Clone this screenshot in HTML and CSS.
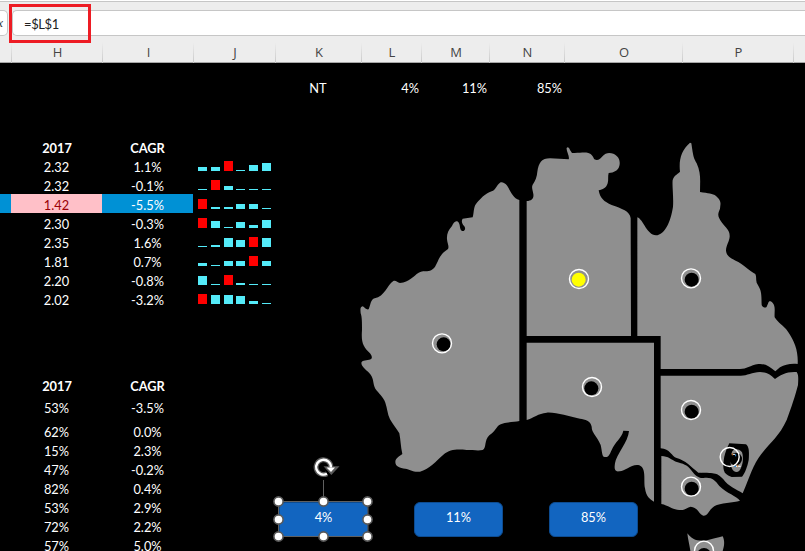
FILE: index.html
```
<!DOCTYPE html>
<html lang="en">
<head>
<meta charset="utf-8">
<title>Workbook</title>
<link rel="stylesheet" href="styles.css">
</head>
<body>
<div class="app">
  <header class="formula-bar">
    <div class="fx-box"><i>fx</i></div>
    <div class="formula-input">=$L$1</div>
  </header>
  <div class="highlight-box"></div>
  <div class="columns grid-cols">
    <span></span><span>H</span><span>I</span><span>J</span><span>K</span><span>L</span><span>M</span><span>N</span><span>O</span><span>P</span><span></span>
  </div>
  <main class="sheet">
    <div class="row top-row grid-cols">
      <b></b><b></b><b></b><b></b><span class="c">NT</span><span class="r">4%</span><span class="r">11%</span><span class="r">85%</span>
    </div>
    <div class="table table-one" id="growth">
      <div class="row head grid-cols"><b></b><span>2017</span><span>CAGR</span></div>
      <div class="row grid-cols"><b></b><span>2.32</span><span>1.1%</span><div class="spark" data-v="4,4,10,1,6,8"></div></div>
      <div class="row grid-cols"><b></b><span>2.32</span><span>-0.1%</span><div class="spark" data-v="1,10,4,1,1,1"></div></div>
      <div class="row picked grid-cols"><b></b><span class="low">1.42</span><span>-5.5%</span><div class="spark" data-v="10,2,2,5,5,1"></div></div>
      <div class="row grid-cols"><b></b><span>2.30</span><span>-0.3%</span><div class="spark" data-v="10,7,1,6,3,8"></div></div>
      <div class="row grid-cols"><b></b><span>2.35</span><span>1.6%</span><div class="spark" data-v="1,2,9,7,10,9"></div></div>
      <div class="row grid-cols"><b></b><span>1.81</span><span>0.7%</span><div class="spark" data-v="3,1,5,5,10,5"></div></div>
      <div class="row grid-cols"><b></b><span>2.20</span><span>-0.8%</span><div class="spark" data-v="9,1,10,2,1,1"></div></div>
      <div class="row grid-cols"><b></b><span>2.02</span><span>-3.2%</span><div class="spark" data-v="10,9,9,8,3,1"></div></div>
    </div>
    <div class="table table-two">
      <div class="row head grid-cols"><b></b><span>2017</span><span>CAGR</span></div>
      <div class="row h22 grid-cols"><b></b><span>53%</span><span>-3.5%</span></div>
      <div class="row h24 grid-cols"><b></b><span>62%</span><span>0.0%</span></div>
      <div class="row grid-cols"><b></b><span>15%</span><span>2.3%</span></div>
      <div class="row grid-cols"><b></b><span>47%</span><span>-0.2%</span></div>
      <div class="row grid-cols"><b></b><span>82%</span><span>0.4%</span></div>
      <div class="row grid-cols"><b></b><span>53%</span><span>2.9%</span></div>
      <div class="row grid-cols"><b></b><span>72%</span><span>2.2%</span></div>
      <div class="row grid-cols"><b></b><span>57%</span><span>5.0%</span></div>
    </div>

    <svg class="map" viewBox="0 0 1365 1263" width="455" height="421">
      <g class="land">
        <path d="M508 210C490 205 482 185 472 168C465 158 455 155 450 158C440 164 438 180 425 184C405 190 390 208 378 222C370 232 372 250 368 262L338 266C332 275 338 285 344 290C348 298 342 306 335 302C328 298 332 282 324 275C316 270 310 278 306 288C294 302 290 312 291 328C292 340 298 350 294 357C280 366 272 376 266 388C258 406 254 418 240 422C228 425 220 421 206 428C190 438 178 456 150 459C142 458 138 450 130 453C112 464 104 500 74 505C62 508 62 524 56 538C48 540 44 532 38 529C30 530 31 540 32 550C36 560 36 580 36 600C33 640 40 650 60 670C68 680 66 686 62 688C50 692 38 690 34 698C34 712 54 722 62 734C72 748 68 760 76 776C86 790 100 800 106 818C112 836 112 850 120 868C130 886 140 896 148 910C152 930 152 950 157 972C150 978 136 984 136 996C136 1010 150 1014 166 1016C180 1018 190 1028 210 1025C236 1018 260 992 280 974C300 958 320 957 350 960C370 960 385 963 398 960C410 954 402 930 418 916C430 908 436 898 444 888C456 876 490 877 508 873Z"/>
        <path d="M530 213C545 212 552 205 550 192C548 180 544 172 548 164C556 152 561 140 562 125C566 98 575 85 600 85L656 88C660 80 648 62 650 54C653 50 657 52 660 60L666 69C690 70 700 66 715 69C726 73 728 78 733 88C744 94 750 86 756 80C768 66 780 68 790 71C806 78 812 92 808 108C804 122 792 128 776 129C773 138 776 150 773 160C768 176 758 178 746 181C750 205 762 215 785 225C815 236 840 243 842 265L843 618H530Z"/>
        <path d="M862 262C880 268 890 315 918 316C945 314 962 275 969 230C971 200 966 165 968 150C972 135 985 132 990 125C986 90 994 60 1020 38L1024 40C1030 80 1030 82 1040 100C1054 130 1050 155 1050 186C1075 190 1088 190 1098 198C1118 215 1110 225 1110 236C1100 258 1106 262 1115 277C1128 295 1140 300 1139 320C1138 335 1128 345 1128 362C1130 382 1150 388 1165 396C1185 408 1195 420 1216 432C1220 440 1217 446 1220 458C1232 480 1235 480 1235 525C1238 534 1248 534 1250 530C1256 520 1254 512 1262 514C1280 525 1272 545 1274 562C1285 580 1300 585 1314 605C1335 635 1345 665 1343 702C1320 700 1305 704 1290 712L1276 724C1260 710 1245 700 1225 702C1200 706 1190 717 1170 717H932V618H862Z"/>
        <path d="M530 638H912V1115C900 1108 888 1100 885 1075C880 1050 890 1015 868 1006C845 1000 825 1025 808 1024C795 1026 792 1018 795 1000C798 975 835 935 837 903L820 902C815 925 795 935 785 960C777 978 775 982 764 981C755 980 757 965 752 945C740 915 725 910 725 890C722 872 705 868 690 866C655 860 620 846 590 848C565 850 550 864 530 870Z"/>
        <path d="M932 737H1170C1190 738 1205 727 1230 726C1255 727 1262 735 1275 747C1290 735 1310 724 1340 726C1346 735 1345 745 1344 765C1335 800 1325 830 1310 870C1285 925 1255 940 1225 985C1205 1015 1190 1065 1178 1090C1160 1078 1135 1070 1120 1048C1100 1025 1090 1030 1045 1028C1025 1012 1005 990 980 984C965 980 960 956 932 955Z"/>
        <path d="M934 978C955 978 965 990 978 995C1000 1002 1010 1002 1025 1022C1035 1035 1045 1045 1060 1044C1085 1040 1095 1050 1108 1068C1130 1090 1160 1098 1170 1112C1150 1118 1110 1118 1094 1128C1075 1140 1075 1158 1060 1157C1045 1152 1045 1132 1022 1130C1010 1132 1005 1142 988 1140C965 1138 955 1126 934 1122Z"/>
        <path d="M1012 1210C1030 1232 1040 1232 1065 1232C1085 1228 1105 1222 1118 1219C1126 1235 1122 1250 1116 1270H1022C1020 1250 1014 1230 1012 1210Z"/>
      </g>
      <path d="M1138 940L1188 943C1197 950 1198 965 1196 990C1192 1010 1185 1030 1176 1040L1145 1041C1130 1035 1120 1028 1120 1010C1120 980 1128 960 1138 940Z"/>
      <path class="land" d="M1146 966C1150 955 1168 955 1176 967C1182 985 1178 1010 1168 1022C1160 1030 1150 1025 1145 1014C1140 1000 1140 980 1146 966Z"/>
      <circle cx="1157" cy="987" r="19"/>
      <path class="speck" d="M1148 973h8M1158 1009h14"/>
      <path class="speck-blue" d="M1152 1009h6M1157 973v6"/>
      <path class="speck-gold" d="M1163 1004v6M1147 970v6"/>
      <circle cx="281" cy="643" r="21"/><circle cx="1025" cy="449" r="21"/><circle cx="724" cy="775" r="21"/>
      <circle cx="1025" cy="845" r="21"/><circle cx="1025" cy="1076" r="21"/><circle cx="1062" cy="1275" r="21"/>
      <circle class="active" cx="686" cy="449" r="21"/>
      <g class="ring">
        <circle cx="276" cy="640" r="28.5"/><circle cx="687" cy="447" r="28.5"/><circle cx="1023" cy="445" r="28.5"/>
        <circle cx="726" cy="771" r="28.5"/><circle cx="1023" cy="840" r="28.5"/><circle cx="1139" cy="981" r="28.5"/>
        <circle cx="1023" cy="1070" r="28.5"/><circle cx="1062" cy="1262" r="28.5"/>
      </g>
    </svg>

    <div class="shape shape-a">4%</div>
    <div class="shape shape-b">11%</div>
    <div class="shape shape-c">85%</div>

    <svg class="selection" viewBox="0 0 110 90" width="110" height="90">
      <path class="frame" d="M53.500 25V46.500M8.500 46.500H98V81.500H8.500Z"/>
      <g class="handles">
        <circle cx="8.500" cy="46.500" r="4.600"/><circle cx="53.500" cy="46.500" r="4.600"/><circle cx="97.500" cy="46.500" r="4.600"/>
        <circle cx="8.500" cy="64.500" r="4.600"/><circle cx="97.500" cy="64.500" r="4.600"/>
        <circle cx="8.500" cy="81.500" r="4.600"/><circle cx="53.500" cy="81.500" r="4.600"/><circle cx="97.500" cy="81.500" r="4.600"/>
      </g>
      <path class="turn-edge" d="M57 18.700A7.400 7.400 0 1 1 60.900 12.500"/>
      <path class="turn-tip" d="M53.500 11.200H69.500L61.300 20Z"/>
      <path class="turn" d="M57 18.700A7.400 7.400 0 1 1 60.900 12.500"/>
      <path class="turn-head" d="M56.500 12.500H65L61 17Z"/>
    </svg>
  </main>
</div>
<script src="spark.js"></script>
</body>
</html>
```
FILE: styles.css
```
* { box-sizing: border-box; }
body { margin: 0; background: #000; overflow: hidden; }
.app { position: relative; width: 805px; height: 551px; overflow: hidden; font-family: Lato, "Open Sans", sans-serif; }

.formula-bar {
  display: flex;
  gap: 4px;
  height: 36px;
  padding-top: 9px;
  background: #ededed;
  border-top: 1px solid #fff;
  box-shadow: inset 0 1px #c6c6c6;
}
.fx-box {
  display: flex;
  align-items: center;
  justify-content: flex-end;
  width: 8px;
  height: 26px;
  padding-right: 4px;
  overflow: hidden;
  background: #fff;
  border: 1px solid #c6c6c6;
  border-left: 0;
  border-radius: 0 5px 5px 0;
  font: 13px "Liberation Serif", serif;
  color: #333;
}
.formula-input {
  flex: 1;
  height: 26px;
  padding-left: 11px;
  background: #fff;
  border: 1px solid #c6c6c6;
  border-right: 0;
  border-radius: 5px 0 0 5px;
  font-size: 13px;
  letter-spacing: -0.4px;
  line-height: 26px;
  color: #222;
}
.highlight-box {
  position: absolute;
  z-index: 2;
  left: 9px;
  top: 4px;
  width: 82px;
  height: 39px;
  border: 3px solid #ed1c24;
}

.grid-cols { display: grid; grid-template-columns: 11px 91px 91px 82px 86px 60px 68px 75px 118px 111px 12px; }
.columns {
  height: 27px;
  background: #ededed;
  border-bottom: 1px solid #a6a6a6;
  font: 13px/32px "Open Sans", sans-serif;
  color: #444;
  text-align: center;
}
.columns span {
  background: linear-gradient(#ededed 20%, #c0c0c0) right bottom / 1px 100% no-repeat;
  position: relative;
  left: 1px;
}

.sheet { position: relative; height: 488px; background: #000; color: #fff; font-size: 12.800px; }
.row { height: 19px; grid-template-rows: 100%; line-height: 23px; text-align: center; }
.row > span { white-space: nowrap; }
.top-row { padding-top: 14px; height: 33px; }
.top-row .r { text-align: right; padding-right: 2px; }
.table-one { margin-top: 41px; }
.table-two { margin-top: 67px; }
.head { font-weight: 700; }
.head > span:nth-child(2) { padding-left: 1px; }
.h22 { height: 22px; line-height: 28px; }
.h24 { height: 24px; line-height: 32px; }
.picked > b, .picked > span { background: #0091d5; }
.picked > .low { background: #ffc0c8; color: #9c0006; }
.spark { display: grid; grid-template-columns: 13px 13px 12px 13px 13px 9px; align-items: end; height: 15px; padding-left: 5px; }
.spark i { width: 9px; background: #54ebf9; }
.spark i.peak { background: #f00; }

.map { position: absolute; left: 350px; top: 67px; }
.land { fill: #8f8f8f; }
.active { fill: #ff0; }
.ring { fill: none; stroke: #fff; stroke-width: 4.200; }
.speck { stroke: #fff; stroke-width: 3; }
.speck-blue { stroke: #2588df; stroke-width: 3; }
.speck-gold { stroke: #c66d20; stroke-width: 3; }

.shape {
  position: absolute;
  top: 439px;
  width: 89px;
  height: 35px;
  border: 1px solid #0d4c91;
  border-radius: 6px;
  background: #1265c0;
  line-height: 29px;
  text-align: center;
}
.shape-a { left: 279px; }
.shape-b { left: 414px; }
.shape-c { left: 549px; }

.selection { position: absolute; left: 270px; top: 392px; }
.frame { fill: none; stroke: #606060; stroke-width: 1; }
.handles { fill: #fff; stroke: #595959; stroke-width: 1.600; }
.turn-edge { fill: none; stroke: #595959; stroke-width: 5; }
.turn-tip { fill: #595959; }
.turn { fill: none; stroke: #fff; stroke-width: 2.400; }
.turn-head { fill: #fff; }
```
FILE: spark.js
```
document.querySelectorAll('.spark').forEach(function (cell) {
  var values = cell.dataset.v.split(',').map(Number);
  var peak = values.indexOf(Math.max.apply(null, values));
  values.forEach(function (value, index) {
    var bar = document.createElement('i');
    bar.style.height = value + 'px';
    if (index === peak) bar.className = 'peak';
    cell.appendChild(bar);
  });
});
```
